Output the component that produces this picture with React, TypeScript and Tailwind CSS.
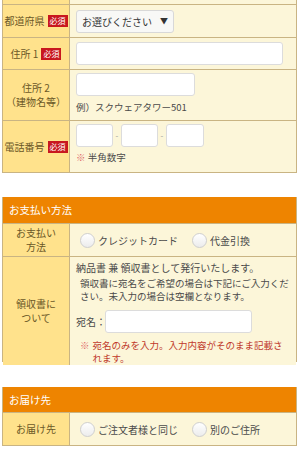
import React from 'react'

const font = { fontFamily: '"Noto Sans CJK JP", "Noto Sans", sans-serif' }

function Badge() {
  return (
    <span className="ml-[3px] inline-flex h-[12px] items-center whitespace-nowrap bg-[#c8171e] px-[2px] text-[8px] leading-none text-white">
      必須
    </span>
  )
}

function Radio({ label }: { label: string }) {
  return (
    <label className="flex items-center gap-[3px] whitespace-nowrap">
      <span className="h-[15px] w-[15px] rounded-full border border-[#cfcfcf] bg-gradient-to-b from-white to-[#ececec]" />
      <span>{label}</span>
    </label>
  )
}

function Row({
  label,
  children,
  className = '',
  last = false,
}: {
  label: React.ReactNode
  children: React.ReactNode
  className?: string
  last?: boolean
}) {
  return (
    <div className={`grid grid-cols-[67px_1fr] ${last ? '' : 'border-b border-[#c9b483]'} ${className}`}>
      <div className="flex items-center justify-center whitespace-nowrap border-r border-[#c9b483] bg-[#ffe28c] text-center leading-[14px] text-[#6b5827]">
        {label}
      </div>
      <div className="bg-[#fcf6d9] px-[6px]">{children}</div>
    </div>
  )
}

function Input({ className = '' }: { className?: string }) {
  return <div className={`h-[23px] rounded-[3px] border border-[#dcdcdc] bg-white ${className}`} />
}

export default function App() {
  return (
    <div className="h-[450px] w-[300px] overflow-hidden bg-white text-[10px] text-[#4a4a4a]" style={font}>
      <div className="ml-[2px] w-[295px]">
        {/* address block */}
        <div className="border-x border-b border-[#c9b483]">
          <Row label={null} className="h-[5px]">
            <span />
          </Row>
          <Row
            label={
              <span className="flex items-center">
                都道府県
                <Badge />
              </span>
            }
            className="h-[33px]"
          >
            <div className="flex h-full items-center">
              <div className="flex h-[23px] items-center gap-[8px] rounded-[3px] border border-[#d8d8d8] bg-[#f8f8f6] px-[5px] text-[#333]">
                お選びください
                <span className="text-[8px]">▼</span>
              </div>
            </div>
          </Row>
          <Row
            label={
              <span className="flex items-center">
                住所 1
                <Badge />
              </span>
            }
            className="h-[32px]"
          >
            <div className="flex h-full items-center pr-[7px]">
              <Input className="w-full" />
            </div>
          </Row>
          <Row
            label={
              <span>
                住所 2
                <br />
                （建物名等）
              </span>
            }
            className="h-[51px]"
          >
            <div className="pt-[3px]">
              <Input className="w-[119px]" />
              <div className="mt-[4px] text-[9.5px] leading-[14px]">例）スクウェアタワー501</div>
            </div>
          </Row>
          <Row
            label={
              <span className="flex items-center">
                電話番号
                <Badge />
              </span>
            }
            className="h-[51px]"
            last
          >
            <div className="pt-[3px]">
              <div className="flex items-center">
                <Input className="w-[37px]" />
                <span className="w-[8px] text-center text-[8px] text-[#999]">-</span>
                <Input className="w-[37px]" />
                <span className="w-[8px] text-center text-[8px] text-[#999]">-</span>
                <Input className="w-[38px]" />
              </div>
              <div className="mt-[3px] text-[9.5px] leading-[14px]">
                <span className="text-[#e06a6a]">※</span> 半角数字
              </div>
            </div>
          </Row>
        </div>

        {/* payment */}
        <div className="mt-[24px] border-x border-b border-[#c9b483]">
          <div className="flex h-[26px] items-center bg-[#ee8400] px-[6px] text-[10.5px] text-white">お支払い方法</div>
          <div className="border-t border-[#c9b483]" />
          <Row
            label={
              <span>
                お支払い
                <br />
                方法
              </span>
            }
            className="h-[33px]"
          >
            <div className="flex h-full items-center gap-[14px] pl-[4px]">
              <Radio label="クレジットカード" />
              <Radio label="代金引換" />
            </div>
          </Row>
          <Row
            label={
              <span>
                領収書に
                <br />
                ついて
              </span>
            }
            className="h-[104px]"
            last
          >
            <div className="pt-[4px]">
              <div className="leading-[14px]">納品書 兼 領収書として発行いたします。</div>
              <div className="mt-[2px] pl-[4px] text-[9.5px] leading-[13px]">
                領収書に宛名をご希望の場合は下記にご入力ください。未入力の場合は空欄となります。
              </div>
              <div className="mt-[7px] flex items-center">
                <span className="w-[29px] whitespace-nowrap">宛名：</span>
                <Input className="w-[147px]" />
              </div>
              <div className="mt-[6px] flex pl-[4px] pr-[6px] text-[9.5px] leading-[13px] text-[#c0392b]">
                <span className="mr-[3px] text-[#e06a6a]">※</span>
                <span>宛名のみを入力。入力内容がそのまま記載されます。</span>
              </div>
            </div>
          </Row>
        </div>

        {/* delivery */}
        <div className="mt-[25px] border-x border-b border-[#c9b483]">
          <div className="flex h-[25px] items-center bg-[#ee8400] px-[6px] text-[10.5px] text-white">お届け先</div>
          <div className="border-t border-[#c9b483]" />
          <Row label="お届け先" className="h-[32px]" last>
            <div className="flex h-full items-center gap-[14px] pl-[4px]">
              <Radio label="ご注文者様と同じ" />
              <Radio label="別のご住所" />
            </div>
          </Row>
        </div>
      </div>
    </div>
  )
}
